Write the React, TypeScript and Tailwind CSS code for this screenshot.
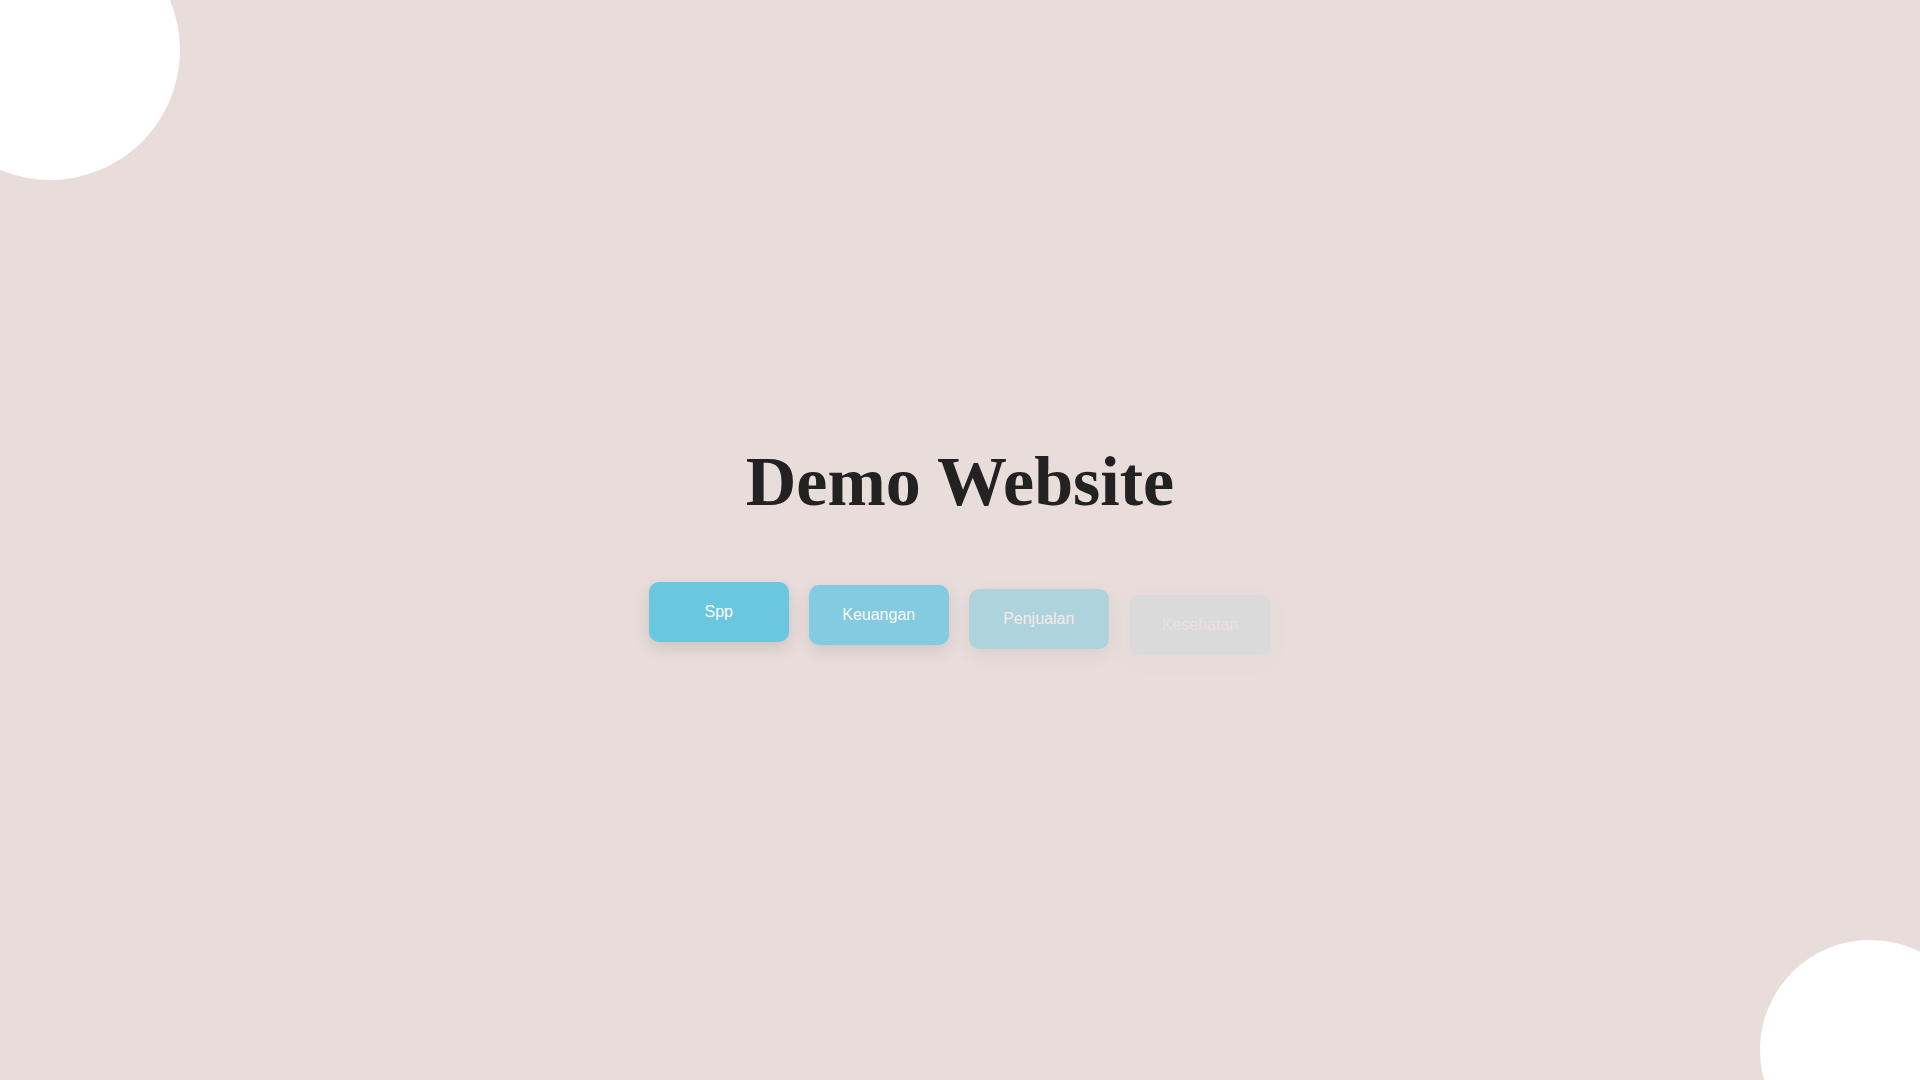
import React from "react";

type Item = { label: string; fade: string };

// Menu buttons drawn in the middle of a staggered fade-in
const items: Item[] = [
  { label: "Spp", fade: "opacity-100 translate-y-0" },
  { label: "Keuangan", fade: "opacity-80 translate-y-[3px]" },
  { label: "Penjualan", fade: "opacity-[0.45] translate-y-[7px]" },
  { label: "Kesehatan", fade: "opacity-[0.1] translate-y-[13px]" },
];

export default function App() {
  return (
    <div className="relative min-h-screen w-full overflow-hidden bg-[#e8ddda]">
      {/* decorative blobs in the corners */}
      <div className="absolute left-[-80px] top-[-80px] h-[260px] w-[260px] rounded-full bg-white" />
      <div className="absolute left-[1760px] top-[940px] h-[220px] w-[220px] rounded-full bg-white" />

      <main className="relative flex min-h-screen flex-col items-center justify-center pt-[9px]">
        <h1
          className="mb-[65px] text-[70px] font-bold leading-none text-[#222222]"
          style={{ fontFamily: '"Liberation Serif", "Times New Roman", serif' }}
        >
          Demo Website
        </h1>
        <div className="flex items-start gap-5">
          {items.map((it) => (
            <button
              key={it.label}
              type="button"
              className={`flex h-[60px] min-w-[140px] items-center justify-center rounded-[10px] bg-[#6bc7df] px-[33px] text-[16px] text-white shadow-[0_6px_16px_rgba(0,0,0,0.12)] ${it.fade}`}
              style={{ fontFamily: '"Liberation Sans", Arial, sans-serif' }}
            >
              {it.label}
            </button>
          ))}
        </div>
      </main>
    </div>
  );
}
